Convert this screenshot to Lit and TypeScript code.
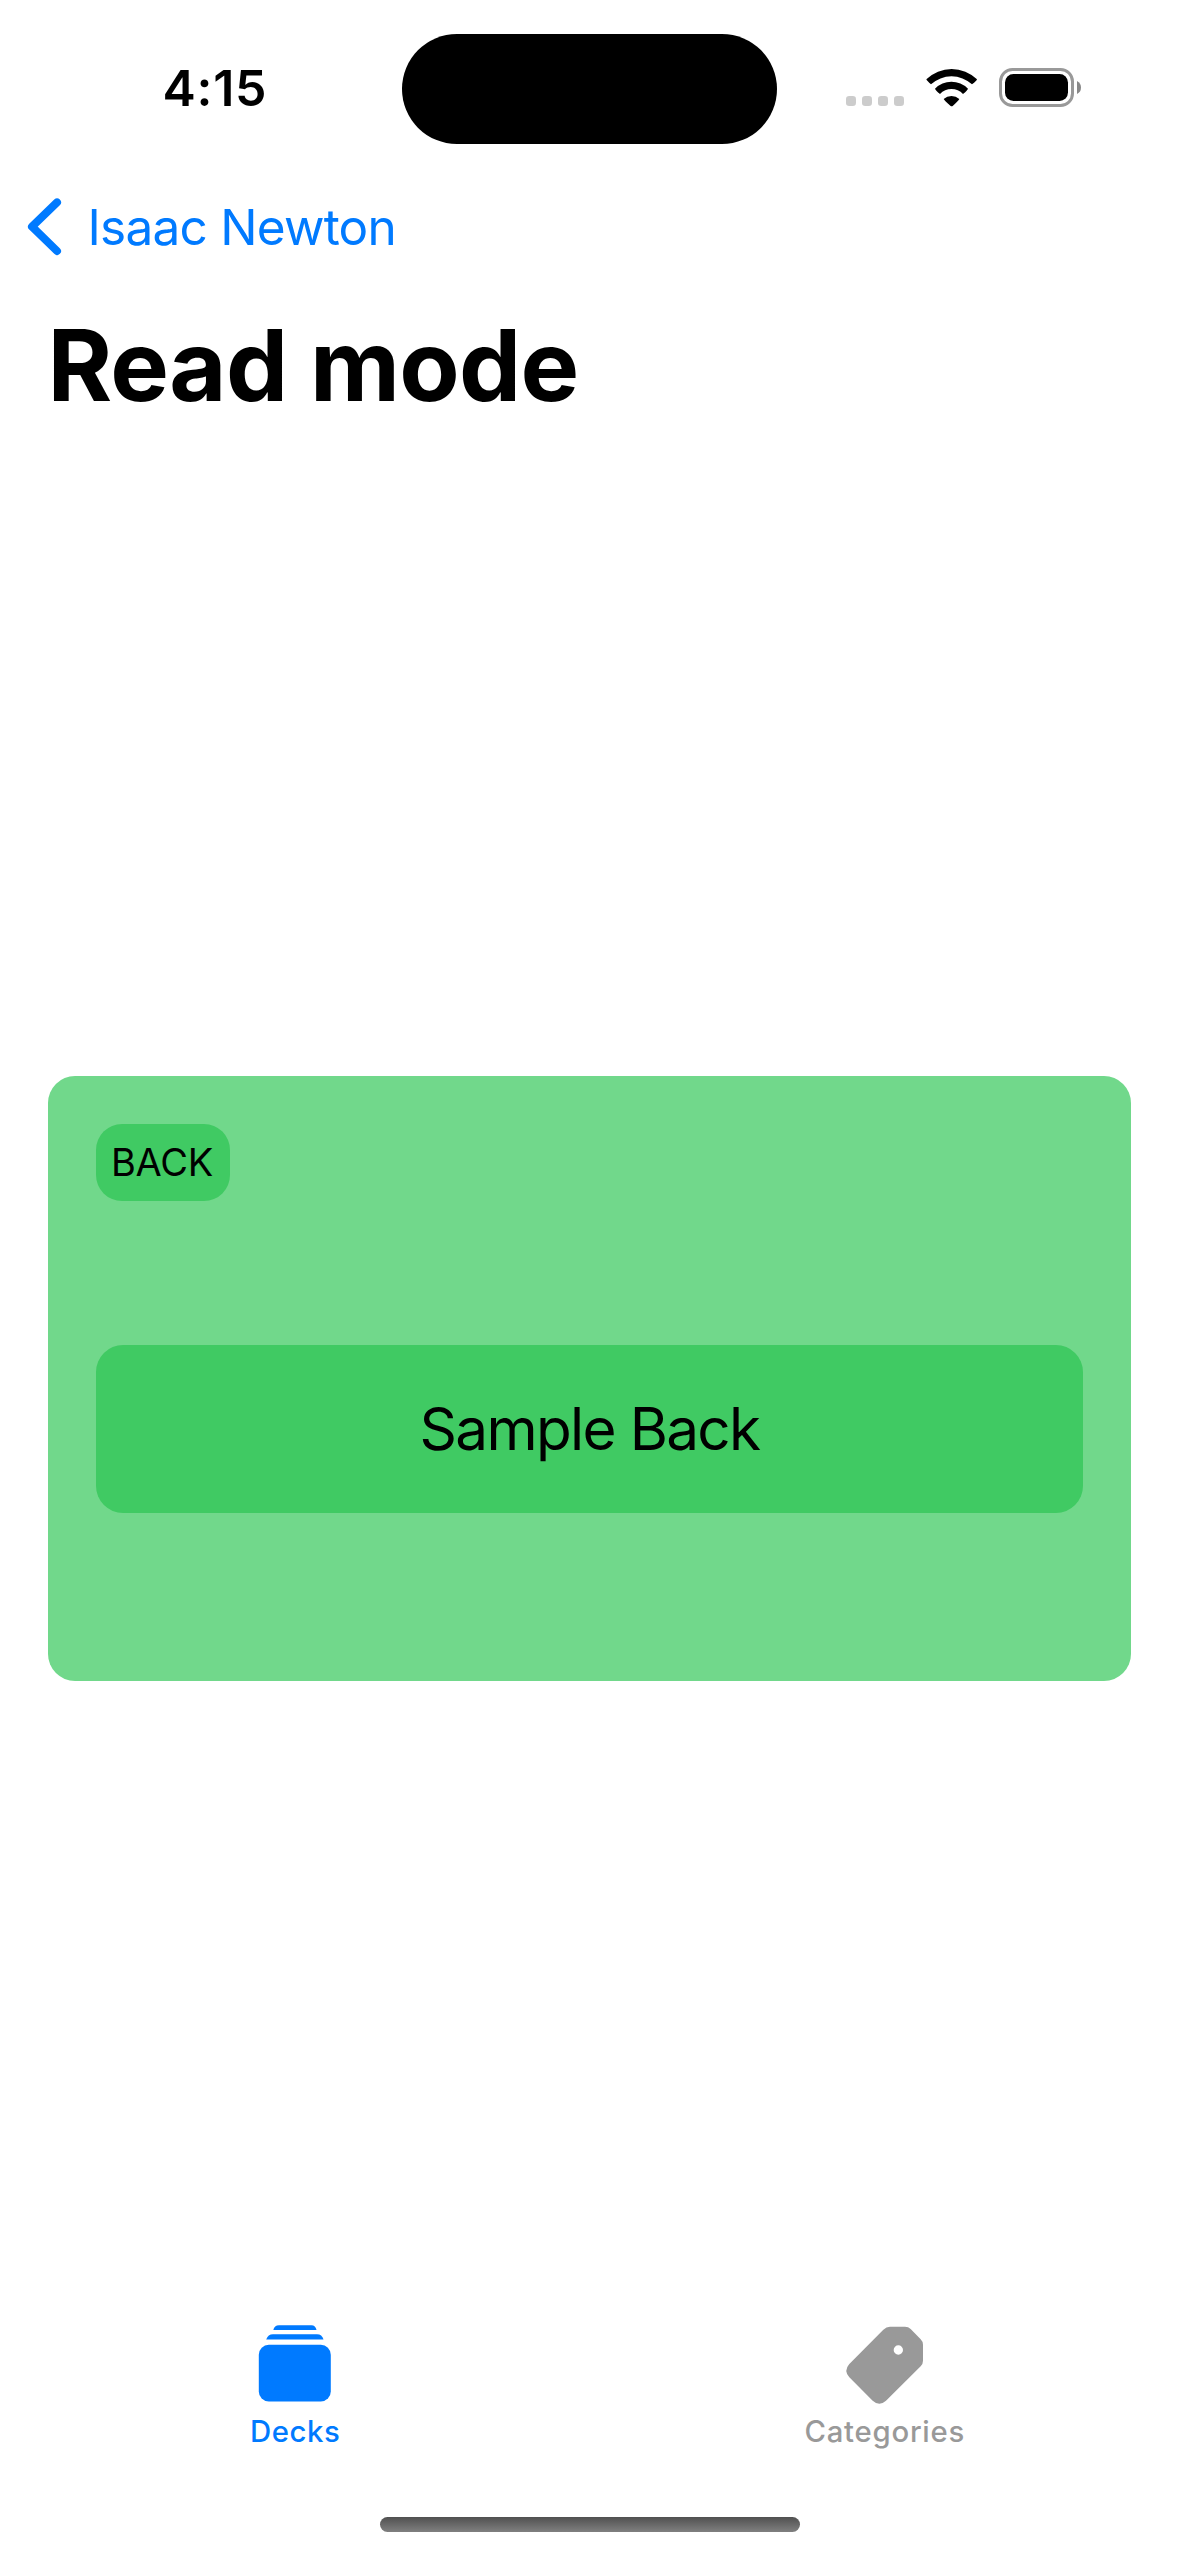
import { LitElement, html, css, svg } from "lit";
import { customElement } from "lit/decorators.js";

@customElement("status-bar")
export class StatusBar extends LitElement {
  static styles = css`
    :host {
      display: grid;
      grid-template-columns: 402px 375px 402px;
      height: 177px;
      flex: none;
      box-sizing: border-box;
    }
    .time {
      height: 176px;
      line-height: 176px;
      padding-left: 162.5px;
      font-size: 50px;
      font-weight: 600;
      letter-spacing: 0.7px;
      white-space: nowrap;
    }
    .island {
      height: 110.6px;
      margin-top: 33.6px;
      border-radius: 56px;
      background: #000;
    }
    .indicators {
      display: flex;
      align-items: flex-start;
      padding: 68px 0 0 69px;
    }
    svg {
      display: block;
      flex: none;
    }
  `;
  render() {
    return html`
      <div class="time">4:15</div>
      <div class="island"></div>
      <div class="indicators">
        <svg width="236" height="40" viewBox="0 0 236 40">
          ${[0, 16, 32, 48].map((x) => svg`<rect x=${x} y="28" width="10" height="10" rx="3.2" fill="#ccc"/>`)}
          <g transform="translate(-26 -28) scale(.33333)">
            <path d="M319 118A109 109 0 0 1 471 118Q470 123 456 133A91 91 0 0 0 333 133Q321 123 319 118Z"/>
            <path d="M345 146A70 70 0 0 1 444 146Q442 152 429 162A47 47 0 0 0 360 162Q347 152 345 146Z"/>
            <path d="M371 177A35 35 0 0 1 418 177Q416 182 398 198Q395 200 392 198Q373 182 371 177Z"/>
          </g>
          <rect x="154.5" y="1.5" width="72" height="36" rx="12" fill="none" stroke="#999" stroke-width="3"/>
          <rect x="159" y="6" width="63" height="27" rx="8.5"/>
          <path d="M231 13Q235 15 235 19.5T231 26Z" fill="#888"/>
        </svg>
      </div>
    `;
  }
}

@customElement("nav-header")
export class NavHeader extends LitElement {
  static styles = css`
    :host {
      display: flex;
      flex-direction: column;
      height: 273px;
      flex: none;
    }
    .back {
      display: flex;
      flex: none;
      align-items: center;
      height: 100px;
      padding-left: 24px;
      gap: 23.5px;
      color: #007aff;
      font-size: 49.5px;
      letter-spacing: -0.76px;
      white-space: nowrap;
    }
    .back svg {
      display: block;
      flex: none;
    }
    .title {
      flex: none;
      margin: 0;
      height: 173px;
      line-height: 176px;
      padding-left: 47.5px;
      font-size: 98.6px;
      font-weight: 700;
      letter-spacing: -0.7px;
      white-space: nowrap;
    }
  `;
  render() {
    return html`
      <div class="back">
        <svg width="40" height="64" viewBox="0 0 40 64">
          <path d="M33 7.4L8 31.7L33 56" fill="none" stroke="#007aff" stroke-width="8" stroke-linecap="round" stroke-linejoin="round"/>
        </svg>
        <span>Isaac Newton</span>
      </div>
      <h1 class="title">Read mode</h1>
    `;
  }
}

@customElement("flash-card")
export class FlashCard extends LitElement {
  static styles = css`
    :host {
      display: flex;
      flex-direction: column;
      align-items: flex-start;
      box-sizing: border-box;
      height: 605px;
      margin: 0 48px;
      padding: 48px;
      gap: 144px;
      border-radius: 27px;
      background: #71d88b;
    }
    .badge {
      box-sizing: border-box;
      width: 134px;
      height: 77px;
      line-height: 77px;
      padding-left: 15px;
      border-radius: 26px;
      background: #40ca63;
      font-size: 38px;
      letter-spacing: -0.3px;
      white-space: nowrap;
    }
    .content {
      align-self: stretch;
      height: 168px;
      line-height: 168px;
      border-radius: 27px;
      background: #40ca63;
      font-size: 58.4px;
      letter-spacing: -1.66px;
      text-align: center;
      white-space: nowrap;
    }
  `;
  render() {
    return html`
      <div class="badge">BACK</div>
      <div class="content">Sample Back</div>
    `;
  }
}

@customElement("tab-bar")
export class TabBar extends LitElement {
  static styles = css`
    :host {
      display: flex;
      flex-direction: column;
      align-items: center;
      height: 249px;
      flex: none;
    }
    .tabs {
      display: grid;
      grid-template-columns: 1fr 1fr;
      width: 100%;
      height: 210px;
    }
    .tab {
      display: flex;
      flex-direction: column;
      align-items: center;
      color: #999;
      font-size: 29.3px;
      font-weight: 500;
      letter-spacing: 0.76px;
    }
    .tab.active {
      color: #007aff;
      letter-spacing: 0.6px;
    }
    svg {
      display: block;
      margin-top: 13px;
    }
    .label {
      height: 35px;
      line-height: 35px;
      margin-top: 4px;
      padding-left: 1px;
    }
    .home {
      width: 420px;
      height: 15px;
      border-radius: 8px;
      background: linear-gradient(#505050, #808080);
    }
  `;
  render() {
    return html`
      <div class="tabs">
        <div class="tab active">
          <svg width="90" height="90" viewBox="0 0 90 90" fill="currentColor">
            <path d="M23.3 10Q24.3 5.3 29 5.3H61.5Q65.5 5.3 66.5 10Z"/>
            <path d="M16.2 19.5Q18 14.3 23 14.3H67Q72 14.3 73.5 19.5Z"/>
            <rect x="8.8" y="24.8" width="72" height="56.6" rx="10"/>
          </svg>
          <div class="label">Decks</div>
        </div>
        <div class="tab">
          <svg width="90" height="90" viewBox="177 60 270 270" fill="currentColor">
            <path fill-rule="evenodd" d="M330 80H375Q385 80 392 87L422 118Q429 125 429 134V182Q429 192 422 199L318 302Q298 320 278 302L208 232Q190 212 208 192L310 89Q319 80 330 80ZM355 136a14 14 0 1 0 0 28a14 14 0 1 0 0-28Z"/>
          </svg>
          <div class="label">Categories</div>
        </div>
      </div>
      <div class="home"></div>
    `;
  }
}

@customElement("app-root")
export class AppRoot extends LitElement {
  static styles = css`
    :host {
      display: flex;
      flex-direction: column;
      width: 1179px;
      height: 2556px;
      overflow: hidden;
      background: #fff;
      color: #000;
      font-family: Inter, "Liberation Sans", sans-serif;
    }
    main {
      flex: 1;
      display: flex;
      flex-direction: column;
      justify-content: center;
    }
  `;
  render() {
    return html`
      <status-bar></status-bar>
      <nav-header></nav-header>
      <main><flash-card></flash-card></main>
      <tab-bar></tab-bar>
    `;
  }
}
